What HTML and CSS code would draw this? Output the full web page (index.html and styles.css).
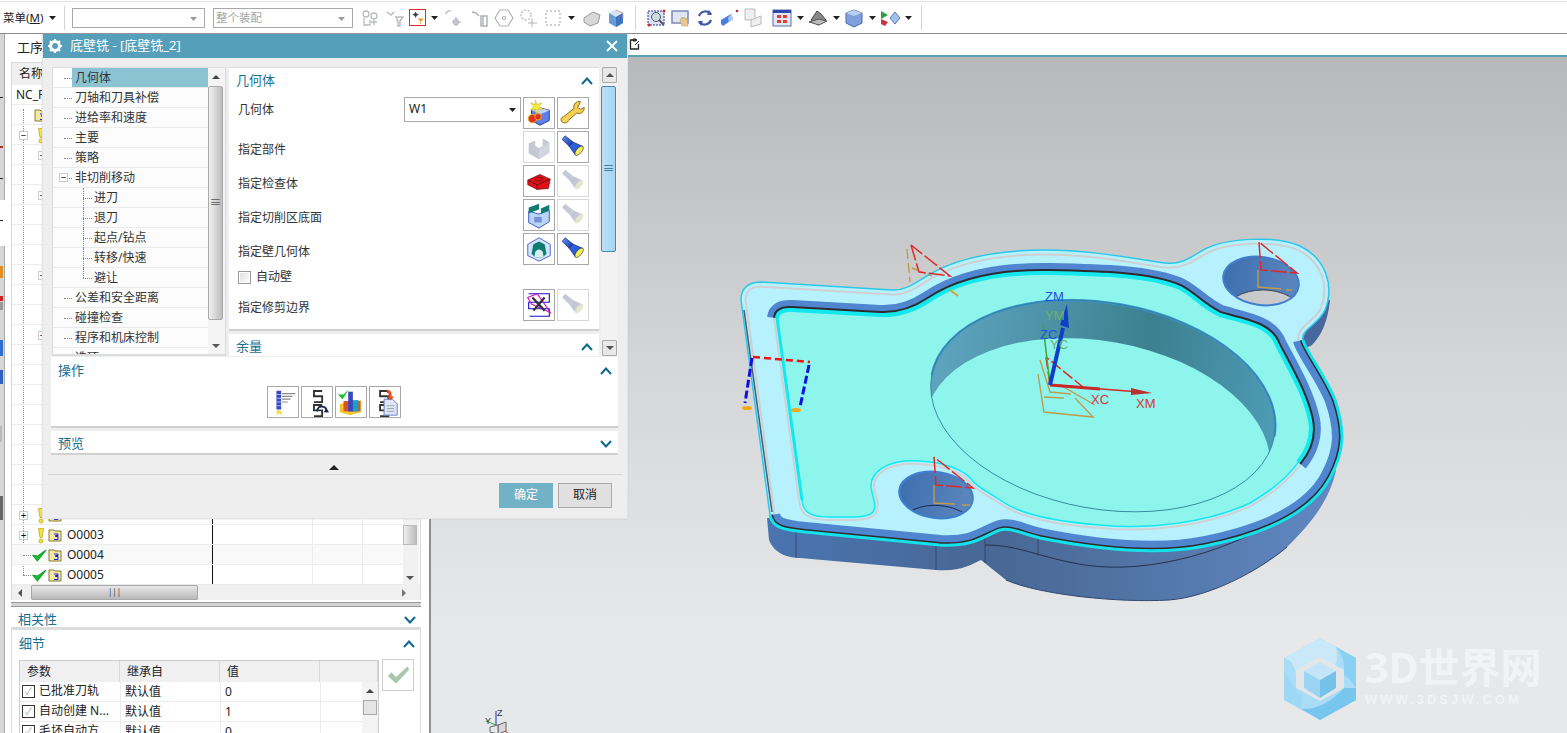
FILE: index.html
```html
<!DOCTYPE html>
<html lang="zh">
<head>
<meta charset="utf-8">
<title>底壁铣</title>
<link rel="stylesheet" href="styles.css">
</head>
<body>
<svg class="defs" width="0" height="0">
  <defs>
    <linearGradient id="gBlue" x1="0" y1="0" x2="1" y2="1"><stop offset="0" stop-color="#6a9cf0"/><stop offset="1" stop-color="#0c2aa8"/></linearGradient>
    <linearGradient id="gWall" x1="0" y1="0" x2="1" y2="0"><stop offset="0" stop-color="#5ea4be"/><stop offset=".6" stop-color="#3c8090"/><stop offset="1" stop-color="#4d9bb5"/></linearGradient>
    <linearGradient id="gSide" x1="0" y1="0" x2="1" y2="0"><stop offset="0" stop-color="#4a74b0"/><stop offset=".4" stop-color="#486793"/><stop offset="1" stop-color="#6088c2"/></linearGradient>
    <linearGradient id="gHole" x1="0" y1="0" x2="1" y2="0"><stop offset="0" stop-color="#3f6fb0"/><stop offset="1" stop-color="#5c86bd"/></linearGradient>
    <symbol id="flash" viewBox="0 0 32 32"><path d="M4.400 7.900L7.600 4.100L16 10.700L12 15.300Z" fill="url(#gBlue)" stroke="#0a1c78" stroke-width=".7"/><path d="M12 15.300L16 10.700L26.400 15.400L18.600 24.600Z" fill="#2f5fd8" stroke="#0a1c78" stroke-width=".7"/><ellipse cx="22.500" cy="20" rx="2.800" ry="6.200" transform="rotate(40 22.500 20)" fill="#f5ee5a" stroke="#123" stroke-width=".6"/></symbol>
    <symbol id="flashoff" viewBox="0 0 32 32"><path d="M4.400 7.900L7.600 4.100L16 10.700L12 15.300Z" fill="#c5c9d6"/><path d="M12 15.300L16 10.700L26.400 15.400L18.600 24.600Z" fill="#c3c7d6"/><ellipse cx="22.500" cy="20" rx="2.800" ry="6.200" transform="rotate(40 22.500 20)" fill="#e6e6cf"/></symbol>
    <symbol id="sfold" viewBox="0 0 14 14"><path d="M1 2h5l1 1h6v10H1Z" fill="#f3e7a4" stroke="#8a7a30"/><path d="M6 6h4v1.500H7.500v1H10v3H6" fill="none" stroke="#1020d8" stroke-width="1"/></symbol>
    <symbol id="warn" viewBox="0 0 10 16"><path d="M2.500 1h5L6 10H4Z" fill="#f5e43a" stroke="#b8a010" stroke-width=".7"/><circle cx="5" cy="13.500" r="2" fill="#f5e43a" stroke="#b8a010" stroke-width=".7"/></symbol>
    <symbol id="okmark" viewBox="0 0 14 14"><path d="M1 7L5 12L13 2L5.500 7.500Z" fill="#18c030" stroke="#10a028"/></symbol>
    <symbol id="caret" viewBox="0 0 7 4"><path d="M0 0H7L3.500 4Z" fill="#222"/></symbol>
    <symbol id="up" viewBox="0 0 12 8"><path d="M1 7L6 1.500L11 7" fill="none" stroke="#0e6a8c" stroke-width="2"/></symbol>
    <symbol id="down" viewBox="0 0 12 8"><path d="M1 1L6 6.500L11 1" fill="none" stroke="#0e6a8c" stroke-width="2"/></symbol>
    <symbol id="sloop" viewBox="0 0 14 24"><path d="M9 1H2v4.500h7v5H2M9 13H2v4.500h7v5H2" fill="none" stroke="#333" stroke-width="1.600"/></symbol>
    <symbol id="gtool" viewBox="0 0 20 20"><g fill="none" stroke="#b9bcc0" stroke-width="1.300"><circle cx="6" cy="6" r="3"/><circle cx="14" cy="8" r="3"/><path d="M4 10v7h6v-5M14 12v5M11 14h6"/></g></symbol>
  </defs>
</svg>

<div class="app">
  <header class="toolbar">
    <span class="menu">菜单(<u>M</u>)</span>
    <svg class="dd"><use href="#caret"/></svg>
    <i class="tsep t0"></i>
    <span class="tcombo first"><svg class="ddg"><use href="#caret"/></svg></span>
    <span class="tcombo second">整个装配<svg class="ddg"><use href="#caret"/></svg></span>
    <span class="ticons">
      <svg class="ti"><use href="#gtool"/></svg>
      <svg class="ti" viewBox="0 0 20 20"><g fill="none" stroke="#b9bcc0" stroke-width="1.500"><path d="M3 4l4 3 3-3M12 9h7l-3 4v5h-2v-5Z"/></g></svg>
      <span class="ti boxed"><svg viewBox="0 0 16 16" width="15" height="15"><path d="M3 5h6M6 2v6" stroke="#333" fill="none"/><circle cx="6" cy="5" r="1.500" fill="none" stroke="#333"/><path d="M8 9h7l-3 3v3h-1v-3Z" fill="#e8a020"/></svg></span>
      <svg class="dd"><use href="#caret"/></svg>
      <svg class="ti ml2" viewBox="0 0 20 20"><g fill="none" stroke="#b0b3b8" stroke-width="1.200"><path d="M2 6q1-4 5-3M12 9v9M8 14h9"/><circle cx="12" cy="14" r="2.500"/></g></svg>
      <svg class="ti ml2" viewBox="0 0 20 20"><g fill="none" stroke="#b0b3b8" stroke-width="1.500"><path d="M2 4l4 1 3 3M11 8h6v10h-6ZM13 8v10"/></g></svg>
      <svg class="ti" viewBox="0 0 20 20"><g fill="none" stroke="#b0b3b8" stroke-width="1.200"><path d="M6 2h8l5 8-5 8H6l-5-8Z"/><circle cx="10" cy="10" r="1.500"/></g></svg>
      <svg class="ti" viewBox="0 0 20 20"><g fill="none" stroke="#b0b3b8" stroke-width="1.200" stroke-dasharray="2 1.500"><circle cx="8" cy="7" r="5"/></g><path d="M14 10v9M10 15h9" stroke="#b0b3b8"/></svg>
      <svg class="ti ml1" viewBox="0 0 20 20"><rect x="3" y="3" width="14" height="14" fill="none" stroke="#9a9da2" stroke-dasharray="2 2"/></svg>
      <svg class="dd"><use href="#caret"/></svg>
      <svg class="ti ml3" viewBox="0 0 20 20"><path d="M2 10l9-6 7 3-2 8-8 3-6-4Z" fill="#d8d8d8" stroke="#999"/></svg>
      <svg class="ti" viewBox="0 0 20 20"><path d="M3 5l7-3 7 3v10l-7 4-7-4Z" fill="#6c9ad8"/><path d="M3 5l7-3 7 3-7 4Z" fill="#d8e6f2"/><path d="M10 9v10l7-4V5Z" fill="#3f74c0"/><path d="M10 2l7 3v5" fill="none" stroke="#e8a0a0"/></svg>
      <i class="tsep"></i>
      <svg class="ti" viewBox="0 0 20 20"><rect x="1" y="3" width="16" height="14" fill="#dbe3f2" stroke="#2030a0" stroke-dasharray="2 1"/><circle cx="9" cy="9" r="4.500" fill="#cdd" stroke="#556"/><path d="M12 12l5 5" stroke="#556" stroke-width="2"/><circle cx="2" cy="17" r="1.500" fill="#d22"/><circle cx="17" cy="3" r="1.500" fill="#d22"/></svg>
      <svg class="ti" viewBox="0 0 20 20"><rect x="1" y="3" width="16" height="12" fill="#dfe5f2" stroke="#7c88b8" stroke-width="1.500"/><path d="M9 12l2-3 1 2 1-2 1 2 2-1 1 8h-6Z" fill="#e8c890" stroke="#b49a60" stroke-width=".5"/></svg>
      <svg class="ti" viewBox="0 0 20 20"><path d="M4 8a7 7 0 0 1 12-2M16 12a7 7 0 0 1-12 2" fill="none" stroke="#4358a8" stroke-width="2.200"/><path d="M14 2l3 5-5 0ZM6 18l-3-5 5 0Z" fill="#4358a8"/></svg>
      <svg class="ti" viewBox="0 0 20 20"><path d="M2 12l10-6 2 5-10 7-2-2Z" fill="#4a7ee0"/><path d="M12 6l2 5-4 3-1-4Z" fill="#a8c8f0"/><circle cx="18" cy="3" r="1.300" fill="#d22"/></svg>
      <svg class="ti" viewBox="0 0 20 20"><g fill="#eee" stroke="#bbb"><path d="M2 1h10v11H2Z"/><path d="M8 12l10-4v8l-10 3Z"/></g></svg>
      <span class="tgap"></span>
      <svg class="ti" viewBox="0 0 20 20"><rect x="1" y="2" width="18" height="16" fill="#e4e8f6" stroke="#5c6cb8"/><rect x="1" y="2" width="18" height="3" fill="#3048a8"/><g fill="#e04030"><rect x="5" y="7" width="4" height="3"/><rect x="11" y="7" width="4" height="3"/><rect x="5" y="12" width="4" height="3"/><rect x="11" y="12" width="4" height="3"/></g></svg>
      <svg class="dd"><use href="#caret"/></svg>
      <svg class="ti" viewBox="0 0 20 20"><path d="M3 12l6-9 4 3 5 6-8 5Z" fill="#888" stroke="#444"/><path d="M1 14l10-3 8 2-8 4Z" fill="#bbb" stroke="#555"/></svg>
      <svg class="dd"><use href="#caret"/></svg>
      <svg class="ti" viewBox="0 0 20 20"><path d="M2 5l8-3 8 3v10l-8 4-8-4Z" fill="#7ea0dc" stroke="#4a68b0"/><path d="M2 5l8 3 8-3-8-3Z" fill="#bcd0ef"/></svg>
      <svg class="dd"><use href="#caret"/></svg>
      <svg class="ti" viewBox="0 0 20 20"><path d="M10 10l5-6 5 6-5 6Z" fill="#a4c0ec" stroke="#5a78b8"/><path d="M1 3l7 4-7 4Z" fill="#28a040"/><path d="M1 11l7 3-3 4-4-2Z" fill="#c83838"/></svg>
      <svg class="dd"><use href="#caret"/></svg>
      <i class="tsep"></i>
    </span>
  </header>

  <div class="main">
    <svg class="strip" viewBox="0 0 5 699" aria-hidden="true">
      <rect width="4" height="166" fill="#d6d6d6"/><rect y="212" width="4" height="487" fill="#d6d6d6"/>
      <rect x="4" width="1" height="166" fill="#aaa"/><rect x="4" y="212" width="1" height="487" fill="#aaa"/>
      <rect y="63" width="3" height="1" fill="#222"/><rect y="112" width="3" height="2" fill="#a03020"/><rect y="144" width="3" height="1" fill="#222"/><rect y="186" width="3" height="1" fill="#222"/>
      <rect y="232" width="3" height="12" fill="#e09020"/><rect y="262" width="3" height="5" fill="#d02020"/><rect y="268" width="3" height="8" fill="#999"/>
      <rect y="306" width="3" height="16" fill="#3070d0"/><rect y="336" width="3" height="14" fill="#3060c0"/><rect y="392" width="2" height="16" fill="#bbb"/><rect y="462" width="3" height="24" fill="#666"/>
    </svg>

    <aside class="left">
      <div class="nav-title">工序导航器</div>
      <section class="nav">
        <div class="nav-head">名称</div>
        <div class="nav-body">
          <div class="nav-rows">
            <div class="nr"><span class="root">NC_PROGRAM</span></div>
            <div class="nr"><svg class="fold f1"><use href="#sfold"/></svg></div>
            <div class="nr"><i class="tg">−</i><svg class="wn w1"><use href="#warn"/></svg></div>
            <div class="nr"><i class="tg sub">−</i></div>
            <div class="nr"></div>
            <div class="nr"><i class="tg sub">−</i></div>
            <div class="nr"></div><div class="nr"></div><div class="nr"></div>
            <div class="nr"><i class="tg sub">−</i></div>
            <div class="nr"></div><div class="nr"></div>
            <div class="nr"><i class="tg sub">−</i></div>
            <div class="nr"></div><div class="nr"></div><div class="nr"></div><div class="nr"></div>
            <div class="nr"></div><div class="nr"></div><div class="nr"></div><div class="nr"></div>
            <div class="nr"><i class="tg">+</i><svg class="wn"><use href="#warn"/></svg><svg class="fold"><use href="#sfold"/></svg><span>O0002</span></div>
            <div class="nr"><i class="tg">+</i><svg class="wn"><use href="#warn"/></svg><svg class="fold"><use href="#sfold"/></svg><span>O0003</span></div>
            <div class="nr alt"><i class="tg none"></i><svg class="ok"><use href="#okmark"/></svg><svg class="fold"><use href="#sfold"/></svg><span>O0004</span></div>
            <div class="nr"><i class="tg none"></i><svg class="ok"><use href="#okmark"/></svg><svg class="fold"><use href="#sfold"/></svg><span>O0005</span></div>
          </div>
          <div class="nav-vs"><i class="nav-vthumb"></i><i class="arrow-d nav-vd"></i></div>
        </div>
        <div class="nav-hs"><i class="arrow-l"></i><i class="nav-hthumb"><b>|||</b></i><i class="arrow-r"></i></div>
      </section>
      <div class="splitter"></div>
      <div class="sect rel"><span>相关性</span><svg class="chev"><use href="#down"/></svg></div>
      <div class="sect det"><span>细节</span><svg class="chev"><use href="#up"/></svg></div>
      <div class="details">
        <div class="grid">
          <div class="grid-head"><span>参数</span><span>继承自</span><span>值</span><span></span></div>
          <div class="grid-wrap">
            <div class="grid-rows">
              <div class="gr"><span class="g1"><i class="cb">✓</i>已批准刀轨</span><span>默认值</span><span>0</span><span></span></div>
              <div class="gr"><span class="g1"><i class="cb">✓</i>自动创建 N...</span><span>默认值</span><span>1</span><span></span></div>
              <div class="gr"><span class="g1"><i class="cb">✓</i>毛坯自动方...</span><span>默认值</span><span>0</span><span></span></div>
            </div>
            <div class="grid-vs"><i class="arrow-u"></i><i class="grid-thumb"></i></div>
          </div>
        </div>
        <button class="okbtn" type="button"><svg viewBox="0 0 32 32" width="30" height="30"><path d="M5 17L9 13L14 18L26 7L28 10L14 25Z" fill="#a9c7ad"/></svg></button>
      </div>
    </aside>

    <main class="view">
      <div class="view-tab"><span class="tab-ic"><svg viewBox="0 0 12 12" width="12" height="12"><path d="M8 2H1.500V11H9.500V6" fill="none" stroke="#222" stroke-width="1.300"/><path d="M4 1h3v2H4ZM6 7l4-4" fill="none" stroke="#222"/></svg></span></div>
      <div class="canvas">
        <svg class="model" viewBox="431 57 1136 676" aria-label="零件">
          <defs>
            <path id="outer" d="M741 300Q741 283 760 282L892 290C905 291 915 283 930 274C960 257 1000 250 1045 250C1090 250 1130 258 1165 263C1180 265 1190 258 1203 250C1225 238 1275 235 1300 246C1325 258 1335 285 1325 310C1318 325 1300 330 1303 340C1305 350 1325 375 1335 400C1345 430 1345 450 1330 478C1310 515 1260 535 1205 546C1160 555 1100 550 1040 538C1020 533 1010 527 1000 530C985 535 975 547 940 545L805 532C785 530 772 528 770 515Z"/>
            <path id="floor" d="M777 318Q778 309 792 310L880 315C900 316 915 310 930 300C960 280 1000 272 1050 273C1100 274 1150 275 1180 288C1195 296 1200 305 1220 315C1245 322 1270 325 1277 345C1290 370 1305 395 1310 420C1315 450 1290 480 1250 503C1210 522 1150 530 1100 525C1060 522 1020 515 1000 500C985 490 978 488 972 480C960 465 930 460 905 461C885 463 872 472 871 485C871 495 878 505 873 512C868 518 855 517 830 517C815 517 803 515 802 500Z"/>
            <path id="topband" d="M777 318Q778 309 792 310L880 315C900 316 915 310 930 300C960 280 1000 272 1050 273C1100 274 1150 275 1180 288C1195 296 1200 305 1220 315C1245 322 1270 325 1277 345C1290 370 1305 395 1310 420C1313 435 1308 450 1298 462"/>
            <path id="botedge" d="M770 515C772 528 785 530 805 532L940 545C975 547 985 535 1000 530C1010 527 1020 533 1040 538C1100 550 1160 555 1205 546C1260 535 1310 515 1330 478C1345 450 1345 430 1335 400C1325 375 1305 350 1303 340"/>
            <clipPath id="clipOuter"><use href="#outer"/></clipPath>
            <clipPath id="clipEll"><ellipse cx="1103" cy="406" rx="174" ry="103" transform="rotate(10 1103 406)"/></clipPath>
            <clipPath id="clipH1"><ellipse cx="1261" cy="281" rx="38" ry="24" transform="rotate(8 1261 281)"/></clipPath>
            <clipPath id="clipH2"><ellipse cx="936" cy="495" rx="37" ry="23" transform="rotate(8 936 495)"/></clipPath>
          </defs>
          <path d="M767 518L769 540C775 555 790 558 800 558L936 570C960 572 970 565 981 560L1006 580C1040 595 1120 603 1169 600C1210 597 1260 570 1287 547C1310 525 1330 500 1336 470L1300 470L1000 525Z" fill="url(#gSide)"/>
          <path d="M985 545C1020 545 1040 558 1085 565C1150 575 1235 550 1290 512" fill="none" stroke="#26314d" stroke-width="1"/>
          <path d="M1006 580C1040 595 1120 603 1169 600C1210 597 1260 570 1287 547" fill="none" stroke="#33476e" stroke-width="1"/>
          <path d="M796 530V558M936 545V570M985 538V563M1038 538V556" stroke="#2c3a5c" stroke-width=".7"/>
          <path d="M1303 338C1300 345 1305 350 1312 345C1322 335 1328 320 1330 300L1320 300Z" fill="#46689c"/>
          <use href="#outer" fill="#b7f1fe"/>
          <g clip-path="url(#clipOuter)"><use href="#outer" fill="none" stroke="#cfcfd0" stroke-width="11"/><use href="#outer" fill="none" stroke="#b7f1fe" stroke-width="7"/></g>
          <g clip-path="url(#clipOuter)"><use href="#botedge" fill="none" stroke="#4f86cf" stroke-width="20"/><use href="#botedge" fill="none" stroke="#2c2c30" stroke-width="6"/></g>
          <use href="#outer" fill="none" stroke="#2cc7e8" stroke-width="1.500"/>
          <use href="#botedge" fill="none" stroke="#14e2ea" stroke-width="3"/>
          <path d="M744 310L772 512" stroke="#4a5a70" stroke-width="1.500" fill="none"/>
          <use href="#floor" fill="none" stroke="#cfd2d4" stroke-width="8"/>
          <use href="#floor" fill="none" stroke="#b7f1fe" stroke-width="4"/>
          <use href="#topband" fill="none" stroke="#4f86cf" stroke-width="20"/>
          <use href="#topband" fill="none" stroke="#2c2c30" stroke-width="8"/>
          <use href="#floor" fill="#8ef5ec"/>
          <use href="#floor" fill="none" stroke="#12e8ee" stroke-width="1.500"/>
          <use href="#topband" fill="none" stroke="#12e8ee" stroke-width="4"/>
          <path d="M777 318L802 500" fill="none" stroke="#12e8ee" stroke-width="3"/>
          <ellipse cx="1103" cy="406" rx="174" ry="103" transform="rotate(10 1103 406)" fill="url(#gWall)"/>
          <g clip-path="url(#clipEll)"><ellipse cx="1098" cy="444" rx="174" ry="103" transform="rotate(10 1098 444)" fill="#8ef5ec"/></g>
          <ellipse cx="1103" cy="406" rx="174" ry="103" transform="rotate(10 1103 406)" fill="none" stroke="#3d93cc" stroke-width="2.500" pathLength="100" stroke-dasharray="0 50 50 0"/>
          <ellipse cx="1103" cy="406" rx="174" ry="103" transform="rotate(10 1103 406)" fill="none" stroke="#2f7f98" stroke-width=".8"/>
          <ellipse cx="1261" cy="281" rx="38" ry="24" transform="rotate(8 1261 281)" fill="url(#gHole)"/>
          <g clip-path="url(#clipH1)"><ellipse cx="1263" cy="313" rx="38" ry="23" fill="#c8cacc" stroke="#223" stroke-width=".7"/></g>
          <ellipse cx="1261" cy="281" rx="38" ry="24" transform="rotate(8 1261 281)" fill="none" stroke="#3f7fce" stroke-width="2"/>
          <ellipse cx="936" cy="495" rx="37" ry="23" transform="rotate(8 936 495)" fill="url(#gHole)"/>
          <g clip-path="url(#clipH2)"><path d="M905 515C920 502 950 502 968 516" fill="none" stroke="#1d2a48"/></g>
          <ellipse cx="936" cy="495" rx="37" ry="23" transform="rotate(8 936 495)" fill="none" stroke="#3f7fce" stroke-width="2"/>
          <g fill="none" stroke="#c09a50" stroke-width="1.400">
            <path d="M907 249L910 282" stroke-dasharray="10 4"/><path d="M912 268L932 276" stroke-dasharray="6 3"/>
            <path d="M1258 270V287L1281 289M1286 290H1292"/>
            <path d="M934 485V503L955 504M962 505H970"/>
            <path d="M1040 360L1050 392L1071 394M1038 374L1044 412L1093 417L1075 398M1044 397L1064 398M1060 385L1095 405"/>
            <path d="M950 290L958 296" stroke="#d8a030" stroke-width="2"/>
          </g>
          <g fill="none" stroke="#e02828" stroke-width="1.500">
            <path d="M911 245L919 272L950 276L911 245" stroke-dasharray="16 3"/>
            <path d="M1259 242L1261 270L1297 273L1259 242" stroke-dasharray="16 3"/>
            <path d="M934 457L936 485L973 488L934 457" stroke-dasharray="16 3"/>
            <path d="M1046 357L1050 385L1083 387L1046 357" stroke-dasharray="12 3"/>
          </g>
          <path d="M753 357L810 362" stroke="#f01010" stroke-width="2.500" stroke-dasharray="7 4" fill="none"/>
          <path d="M752 358L745 403M809 365L800 407" stroke="#0c10e8" stroke-width="3" stroke-dasharray="8 3" fill="none"/>
          <ellipse cx="747" cy="408" rx="5" ry="2" fill="#f4a818"/><ellipse cx="796" cy="410" rx="5" ry="2" fill="#f4a818"/>
          <path d="M1050 385L1043 325" stroke="#39a839" stroke-width="1.500" fill="none"/>
          <path d="M1050 385L1140 392" stroke="#d82828" stroke-width="1.500" fill="none"/>
          <path d="M1050 385L1100 389" stroke="#c82828" stroke-width="3" fill="none"/>
          <path d="M1131 388L1152 393L1131 395Z" fill="#b83030"/>
          <path d="M1050 385L1063 328" stroke="#0d3fc8" stroke-width="4" fill="none"/>
          <path d="M1060 325L1067 304L1069 328Z" fill="#0d3fc8"/>
          <g class="axlabel">
            <text x="1045" y="301" fill="#1f50e0">ZM</text>
            <text x="1045" y="320" fill="#6cb06c">YM</text>
            <text x="1040" y="339" fill="#1f50e0">ZC</text>
            <text x="1050" y="349" fill="#6cb06c">YC</text>
            <text x="1091" y="404" fill="#d83838">XC</text>
            <text x="1136" y="408" fill="#d83838">XM</text>
          </g>
          <g transform="translate(484 709)" fill="none">
            <path d="M12 2V16" stroke="#2030d0"/><path d="M12 16L2 12" stroke="#28a040"/><path d="M12 16L24 24" stroke="#d02020"/>
            <path d="M14 16l8-3 0 9-8 3Z" fill="#d8d8d8" stroke="#666"/><path d="M6 18l8-2 0 9-8-2Z" fill="#e8e8e8" stroke="#666"/>
          </g>
          <g class="axlabel small"><text x="497" y="716" fill="#333">Z</text><text x="485" y="724" fill="#333">Y</text></g>
        </svg>
        <div class="wm">
          <svg class="wm-logo" viewBox="0 0 72 82" width="72" height="82">
            <path d="M36 0L72 20V62L36 82L0 62V20Z" fill="#a9dcf6"/>
            <path d="M36 0L52 9Q56 25 48 30L36 23L12 37Q10 22 0 20Z" fill="#c9e8f8"/>
            <path d="M52 9L72 20V50Q66 40 60 37V28Q60 18 52 9Z" fill="#89d0f3"/>
            <path d="M72 50V62L36 82L17 71Q40 72 60 50Z" fill="#76c6ee"/>
            <path d="M17 71L0 62V32Q8 50 18 58Z" fill="#9fd8f5"/>
            <path d="M36 19L60 32V50L36 63L12 50V32Z" fill="#e3e6e9"/>
            <path d="M36 24L52 33L36 42L20 33Z" fill="#c4e5f7"/>
            <path d="M20 33L36 42V60L20 50Z" fill="#9bd3f3"/>
            <path d="M52 33L36 42V60L52 50Z" fill="#74c2ea"/>
          </svg>
          <div class="wm-text"><div class="wm-big">3D世界网</div><div class="wm-url">WWW.3DSJW.COM</div></div>
        </div>
      </div>
    </main>
  </div>

  <section class="dialog">
    <div class="dlg-title">
      <svg class="gear" viewBox="0 0 16 16" width="16" height="16"><circle cx="8" cy="8" r="4.500" fill="none" stroke="#fff" stroke-width="3"/><path d="M8 1v3M8 12v3M1 8h3M12 8h3M3 3l2 2M11 11l2 2M13 3l-2 2M5 11l-2 2" stroke="#fff" stroke-width="2"/></svg>
      <span class="dlg-name">底壁铣 - [底壁铣_2]</span>
      <svg class="dlg-x" viewBox="0 0 12 12" width="12" height="12"><path d="M1 1L11 11M11 1L1 11" stroke="#fff" stroke-width="1.800"/></svg>
    </div>
    <div class="dlg-split">
      <div class="dtree">
        <ul class="dtree-list">
          <li class="sel"><span>几何体</span></li>
          <li><span>刀轴和刀具补偿</span></li>
          <li><span>进给率和速度</span></li>
          <li><span>主要</span></li>
          <li><span>策略</span></li>
          <li class="parent"><i class="tg2">−</i><span>非切削移动</span></li>
          <li class="ch"><span>进刀</span></li>
          <li class="ch"><span>退刀</span></li>
          <li class="ch"><span>起点/钻点</span></li>
          <li class="ch"><span>转移/快速</span></li>
          <li class="ch last"><span>避让</span></li>
          <li><span>公差和安全距离</span></li>
          <li><span>碰撞检查</span></li>
          <li><span>程序和机床控制</span></li>
          <li><span>选项</span></li>
        </ul>
        <div class="dtree-vs"><i class="arrow-u au"></i><i class="dtree-thumb"><b>≡</b></i><i class="arrow-d ad"></i></div>
      </div>
      <div class="dform">
        <div class="panels">
          <div class="panel geom">
            <div class="phead"><span>几何体</span><svg class="chev"><use href="#up"/></svg></div>
            <div class="frow top">
              <span class="flabel">几何体</span>
              <span class="fcombo">W1<svg class="dd"><use href="#caret"/></svg></span>
              <button class="ib" type="button"><svg viewBox="0 0 32 32"><path d="M8 13l7-3 12 3v11l-10 5-9-5Z" fill="#5f80e8" stroke="#2238a0"/><path d="M8 13l10 4 9-4-12-3Z" fill="#c6d4f4"/><path d="M12 2l2 5 5-2-3 4 4 3-5 0-2 5-1-5-5 1 3-4-3-4 5 2Z" fill="#f5ee3a" stroke="#c0a020" stroke-width=".5"/><circle cx="9" cy="22" r="4.500" fill="#e03020" stroke="#f0b020"/><circle cx="15" cy="20" r="3.500" fill="#e03020" stroke="#f0b020"/></svg></button>
              <button class="ib" type="button"><svg viewBox="0 0 32 32"><path d="M24 4c-4-1-8 2-7 7L6 20c-3 0-4 5-1 6s5 1 6-2l9-8c4 2 8-1 8-6l-4 2-3-2Z" fill="#f2cf50" stroke="#8a6a10"/><path d="M6 25l4-4" stroke="#fff3b0"/></svg></button>
            </div>
            <div class="frow">
              <span class="flabel">指定部件</span>
              <button class="ib off" type="button"><svg viewBox="0 0 32 32"><path d="M5 12l7-3v6l4 2 4-2V7l7 4v11l-11 7-11-6Z" fill="#c4c8d2"/><path d="M16 17v12l11-7V11l-7 4Z" fill="#d2d5dd"/></svg></button>
              <button class="ib" type="button"><svg viewBox="0 0 32 32"><use href="#flash"/></svg></button>
            </div>
            <div class="frow">
              <span class="flabel">指定检查体</span>
              <button class="ib" type="button"><svg viewBox="0 0 32 32"><path d="M4 15L17 9L28 14L26 24L14 25L4 20Z" fill="#e00f18" stroke="#601010" stroke-width=".7"/><path d="M4 15L14 20V25M14 20L28 14" fill="none" stroke="#601010"/><ellipse cx="16" cy="14" rx="4" ry="2" fill="none" stroke="#801010"/></svg></button>
              <button class="ib off" type="button"><svg viewBox="0 0 32 32"><use href="#flashoff"/></svg></button>
            </div>
            <div class="frow">
              <span class="flabel">指定切削区底面</span>
              <button class="ib" type="button"><svg viewBox="0 0 32 32"><path d="M5 12V24L16 30L27 23V11L16 15Z" fill="#b8d6f6" stroke="#3a50c8"/><path d="M5 8L16 4V10L5 14ZM18 9L27 5V11L18 15Z" fill="#0f7c70"/><path d="M11 18h8v6h-8Z" fill="#7a90d8"/></svg></button>
              <button class="ib off" type="button"><svg viewBox="0 0 32 32"><use href="#flashoff"/></svg></button>
            </div>
            <div class="frow">
              <span class="flabel">指定壁几何体</span>
              <button class="ib" type="button"><svg viewBox="0 0 32 32"><path d="M16 4L28 11V23L16 29L4 23V11Z" fill="#d4e4fa" stroke="#4a60d8"/><path d="M10 11l6-3 6 3 2 10-4 4H12l-4-4Z" fill="#0f7c70"/><path d="M12 19q4-5 8 0l1 6H11Z" fill="#d8f0f0"/></svg></button>
              <button class="ib" type="button"><svg viewBox="0 0 32 32"><use href="#flash"/></svg></button>
            </div>
            <label class="fcheck"><i class="chk"></i>自动壁</label>
            <div class="frow">
              <span class="flabel">指定修剪边界</span>
              <button class="ib" type="button"><svg viewBox="0 0 32 32"><path d="M5 4H27V13H5V20H27V28H6" fill="none" stroke="#1010d0" stroke-width="1.200"/><path d="M4 8L14 4L24 18L28 24L8 15Z" fill="none" stroke="#d010d0" stroke-width="1.200"/><path d="M9 8L22 22M22 8L10 22" stroke="#333" stroke-width="2.400"/></svg></button>
              <button class="ib off" type="button"><svg viewBox="0 0 32 32"><use href="#flashoff"/></svg></button>
            </div>
          </div>
          <div class="panel rest"><div class="phead"><span>余量</span><svg class="chev"><use href="#up"/></svg></div></div>
        </div>
        <div class="dform-vs"><i class="arrow-u btn"></i><i class="dform-thumb"><b>≡</b></i><i class="arrow-d btn"></i></div>
      </div>
    </div>
    <div class="panel wide ops">
      <div class="phead"><span>操作</span><svg class="chev"><use href="#up"/></svg></div>
      <div class="ops-row">
        <button class="ib" type="button"><svg viewBox="0 0 32 32"><path d="M9 4h5v20H9Z" fill="#3848c0"/><path d="M9 8h5M9 12h5M9 16h5M9 20h5" stroke="#b0c0f0"/><path d="M15 7H29M15 10H26M15 13H24M15 16H21" stroke="#888" stroke-width="1.300"/><path d="M11 24l2 2 3-1-2 2 1 3-3-2-3 2 1-3-2-1 3-1Z" fill="#f0d830"/></svg></button>
        <button class="ib" type="button"><svg viewBox="0 0 32 32"><svg x="4" y="3" width="14" height="24"><use href="#sloop"/></svg><path d="M16 26q1-6 6-5t4 6" fill="none" stroke="#16264e" stroke-width="2"/><path d="M23 27h6l-3-4Z" fill="#16264e"/></svg></button>
        <button class="ib" type="button"><svg viewBox="0 0 32 32"><path d="M4 18L27 14V27L15 30L4 27Z" fill="#f2c830"/><path d="M8 15h18v11H8Z" fill="#e05020"/><path d="M16 14h8v12h-8Z" fill="#20a0c0"/><path d="M13 5h5v21h-5Z" fill="#3848c0"/><path d="M2 8L7 13L14 2L8 8Z" fill="#18c030"/></svg></button>
        <button class="ib" type="button"><svg viewBox="0 0 32 32"><svg x="2" y="3" width="13" height="24"><use href="#sloop"/></svg><path d="M15 13H24L29 18V30H15Z" fill="#dfe6f6" stroke="#6078c0"/><path d="M18 20h8M18 23h8M18 26h8" stroke="#9aa"/><path d="M18 3q5 0 5 5v2h3l-4 4-4-4h2V8q0-2-2-2Z" fill="#e05020"/></svg></button>
      </div>
    </div>
    <div class="panel wide prev"><div class="phead"><span>预览</span><svg class="chev"><use href="#down"/></svg></div></div>
    <div class="collapse"><i class="tri"></i></div>
    <footer class="dlg-foot">
      <button class="b-ok" type="button">确定</button>
      <button class="b-cancel" type="button">取消</button>
    </footer>
  </section>
</div>
</body>
</html>
```
FILE: styles.css
```css
* { box-sizing: border-box; }
html, body { margin: 0; height: 100%; overflow: hidden; }
body { font: 12px/1.2 "Noto Sans", "Noto Sans CJK SC", sans-serif; color: #333; background: #fff; }
.defs { position: absolute; }
i { font-style: normal; }
button { padding: 0; margin: 0; font: inherit; }

.app { position: relative; width: 1567px; height: 733px; display: flex; flex-direction: column; }

/* toolbar */
.toolbar { flex: none; display: flex; align-items: center; background: #fff; border-top: 1px solid #e2e2e2; border-bottom: 1px solid #8c8c8c; padding: 0 0 0 3px; margin-top: 1px; height: 33px; }
.menu { font-size: 11.500px; width: 45px; color: #222; white-space: nowrap; }
.dd { width: 7px; height: 4px; flex: none; margin: 0 0 0 1px; }
.tsep { width: 1px; height: 24px; background: #d4d4d4; margin: 0 11px 0 8px; flex: none; }
.tsep.t0 { margin-right: 7px; }
.tcombo { height: 20px; border: 1px solid #a8a8a8; position: relative; display: flex; align-items: center; padding-left: 2px; color: #a4a4a4; font-size: 11.500px; flex: none; }
.tcombo.first { width: 133px; margin-right: 8px; }
.tcombo.second { width: 140px; }
.ddg { position: absolute; right: 7px; top: 8px; width: 7px; height: 4px; opacity: .45; }
.ticons { display: flex; align-items: center; margin-left: 7px; gap: 4px; }
.ti { width: 20px; height: 20px; flex: none; }
.ti.boxed { width: 17px; height: 17px; border: 1px solid #d83030; display: block; line-height: 0; margin-left: 1px; }
.ml1 { margin-left: 1px; }
.ml2 { margin-left: 2px; }
.ml3 { margin-left: 3px; }
.tgap { width: 1px; }
.ticons .tsep { margin: 0 7px 0 5px; }

/* body */
.main { flex: 1; min-height: 0; display: flex; }
.strip { width: 5px; height: 699px; flex: none; }

/* left panel */
.left { width: 426px; flex: none; padding-left: 6px; border-right: 2px solid #8f8f8f; background: #fff; overflow: hidden; }
.nav-title { height: 28px; font-size: 13px; padding: 6px 0 0 6px; color: #222; white-space: nowrap; }
.nav { width: 410px; border: 1px solid #d8d8d8; border-bottom: 0; }
.nav-head { height: 22px; background: #f0f0f0; font-size: 12px; padding: 4px 0 0 7px; color: #222; }
.nav-body { display: flex; height: 500px; }
.nav-rows { position: relative; width: 391px; }
.nav-rows::before { content: ""; position: absolute; left: 11px; top: 24px; bottom: 10px; border-left: 1px dotted #888; }
.nr { position: relative; height: 20px; display: flex; align-items: center; border-bottom: 1px solid #ececec; padding: 1px 0 0 7px; font-size: 12px; color: #222; background: linear-gradient(#111, #111) 200px 0 / 1px 100% no-repeat, linear-gradient(#ececec, #ececec) 300px 0 / 1px 100% no-repeat, linear-gradient(#ececec, #ececec) 350px 0 / 1px 100% no-repeat; }
.nr.alt { background-color: #f9f9f9; }
.root { margin-left: -3px; color: #222; }
.tg { position: relative; width: 9px; height: 9px; flex: none; border: 1px solid #ccc; background: #fff; color: #111; font-size: 10px; line-height: 7px; text-align: center; margin-right: 8px; }
.tg.sub { margin-left: 19px; }
.tg.none { border: 0; background: none; border-top: 1px dotted #888; height: 1px; margin-left: 4px; margin-right: 0; width: 8px; }
.wn { width: 10px; height: 17px; flex: none; margin-right: 2px; }
.ok { width: 15px; height: 15px; flex: none; margin-right: 1px; margin-left: 1px; }
.fold { width: 14px; height: 14px; flex: none; margin-right: 5px; }
.fold.f1 { margin-left: 15px; }
.nav-vs { position: relative; width: 16px; flex: none; background: #f1f1f1; }
.nav-vthumb { position: absolute; left: 0; right: 2px; top: 440px; height: 20px; background: linear-gradient(90deg, #eee, #bcbcbc); border: 1px solid #bbb; }
.nav-vd { position: absolute; left: 3px; bottom: 5px; }
.nav-hs { height: 15px; position: relative; background: #f0f0f0; }
.nav-hthumb { position: absolute; left: 19px; top: 0; width: 167px; height: 15px; background: linear-gradient(#e8e8e8, #b8b8b8); border: 1px solid #a8a8a8; border-radius: 1px; text-align: center; font-size: 8px; line-height: 12px; color: #444; }
.nav-hthumb b { font-weight: normal; }
.nav-hs .arrow-l { position: absolute; left: 6px; top: 4px; }
.nav-hs .arrow-r { position: absolute; left: 390px; top: 4px; }
.arrow-l { display: block; width: 0; height: 0; border: 4px solid transparent; border-left-width: 0; border-right: 4px solid #555; }
.arrow-r { display: block; width: 0; height: 0; border: 4px solid transparent; border-right-width: 0; border-left: 4px solid #777; }
.arrow-u { display: block; width: 0; height: 0; border: 4px solid transparent; border-top-width: 0; border-bottom: 4px solid #444; }
.arrow-d { display: block; width: 0; height: 0; border: 4px solid transparent; border-bottom-width: 0; border-top: 4px solid #555; }
.splitter { width: 410px; height: 5px; margin-top: 2px; background: #d4d4d4; border: 1px solid #999; border-width: 1px 0; }
.sect { width: 410px; display: flex; align-items: center; justify-content: space-between; padding: 0 5px 0 7px; color: #16708f; font-size: 13px; }
.rel { height: 23px; border-bottom: 3px solid #dcdcdc; padding-top: 5px; }
.det { height: 26px; padding-top: 1px; border-left: 1px solid #dcdcdc; border-right: 1px solid #dcdcdc; }
.chev { width: 12px; height: 8px; flex: none; }
.details { width: 410px; display: flex; gap: 3px; padding: 4px 6px 0 7px; align-items: flex-start; border-left: 1px solid #dcdcdc; border-right: 1px solid #dcdcdc; height: 80px; }
.grid { width: 360px; border: 1px solid #ccc; border-bottom: 0; flex: none; }
.grid-head { display: grid; grid-template-columns: 100px 100px 100px 58px; height: 21px; background: #f0f0f0; align-items: center; font-size: 12px; color: #222; }
.grid-head span { height: 100%; padding: 4px 0 0 7px; border-right: 1px solid #d8d8d8; }
.grid-wrap { display: flex; }
.grid-rows { width: 342px; }
.gr { display: grid; grid-template-columns: 100px 100px 100px 42px; height: 20px; border-bottom: 1px solid #ececec; align-items: center; font-size: 12px; color: #222; }
.gr span { padding-left: 4px; white-space: nowrap; }
.gr span + span { border-left: 1px solid #ececec; height: 100%; padding-top: 3px; }
.gr .g1 { padding-left: 2px; display: flex; align-items: center; }
.cb { width: 13px; height: 13px; border: 1px solid #333; font-size: 10px; line-height: 11px; text-align: center; color: #aaa; margin-right: 4px; flex: none; }
.grid-vs { position: relative; width: 16px; flex: none; background: #f3f3f3; }
.grid-vs .arrow-u { position: absolute; left: 4px; top: 7px; }
.grid-thumb { position: absolute; left: 1px; top: 18px; width: 14px; height: 15px; background: #e4e4e4; border: 1px solid #aaa; }
.okbtn { width: 32px; height: 32px; background: #fff; border: 1px solid #cfcfcf; display: flex; align-items: center; justify-content: center; margin-top: -1px; }

/* graphics view */
.view { flex: 1; min-width: 0; display: flex; flex-direction: column; }
.view-tab { flex: none; background: #fff; border-bottom: 2px solid #5aa0b6; padding: 4px 0 0 198px; line-height: 0; height: 23px; }
.canvas { position: relative; flex: 1; min-height: 0; background: linear-gradient(#b7b8ba, #d4d5d7 45%, #e7e8ea 85%); overflow: hidden; }
.model { position: absolute; left: 0; top: 0; width: 1136px; height: 676px; }
.axlabel text { font: 13px "Liberation Sans", sans-serif; }
.axlabel.small text { font-size: 9px; }
.wm { position: absolute; left: 853px; top: 581px; display: flex; gap: 9px; }
.wm-logo { flex: none; }
.wm-text { padding-top: 8px; }
.wm-big { font: bold 41px/42px "Noto Sans", "Noto Sans CJK SC", sans-serif; color: #f2f3f5; white-space: nowrap; }
.wm-url { font: bold 13px/14px "Liberation Sans", sans-serif; color: #f2f3f5; letter-spacing: 3px; white-space: nowrap; margin-top: 5px; }

/* dialog */
.dialog { position: absolute; left: 42px; top: 34px; width: 586px; height: 485px; background: #eeeeee; border: 1px solid #e4e4e4; border-top: 0; box-shadow: 0 0 1px #bbb; display: flex; flex-direction: column; align-items: flex-start; }
.dlg-title { width: 100%; height: 24px; flex: none; background: #559fba; color: #fff; display: flex; align-items: center; padding: 0 9px 0 4px; font-size: 13px; }
.dlg-name { margin-left: 7px; flex: 1; }
.dlg-split { display: flex; gap: 3px; margin: 9px 0 0 9px; height: 289px; flex: none; }
.dtree { width: 174px; height: 289px; display: flex; border: 1px solid #dcdcdc; border-bottom-width: 2px; background: #fff; overflow: hidden; }
.dtree-list { position: relative; list-style: none; margin: 0; padding: 0; width: 155px; }
.dtree-list::before { content: ""; position: absolute; left: 10px; top: 8px; bottom: 0; border-left: 1px dotted #888; }
.dtree-list li { position: relative; height: 20px; border-bottom: 1px solid #eaeaea; padding-left: 22px; font-size: 12px; line-height: 19px; color: #333; white-space: nowrap; background: #fcfcfc; }
.dtree-list li::before { content: ""; position: absolute; left: 11px; top: 10px; width: 8px; border-top: 1px dotted #888; }
.dtree-list li.ch { padding-left: 41px; }
.dtree-list li.ch::before { left: 30px; width: 9px; }
.dtree-list li.ch::after { content: ""; position: absolute; left: 30px; top: 0; height: 20px; border-left: 1px dotted #888; }
.dtree-list li.ch.last::after { height: 10px; }
.dtree-list li.sel { background: #fff; }
.dtree-list li.sel span { position: absolute; left: 19px; right: 0; top: 0; height: 19px; background: #8bc3d3; padding-left: 3px; }
.tg2 { position: absolute; left: 6px; top: 5px; width: 9px; height: 9px; border: 1px solid #ccc; background: #fff; font-size: 10px; line-height: 7px; text-align: center; color: #111; z-index: 1; }
.dtree-vs { position: relative; width: 17px; flex: none; background: #f4f4f4; }
.au { position: absolute; left: 4px; top: 7px; }
.ad { position: absolute; left: 4px; bottom: 6px; }
.dtree-thumb { position: absolute; left: 0; top: 18px; width: 15px; height: 234px; background: linear-gradient(90deg, #f0f0f0, #bdbdbd); border: 1px solid #aaa; border-radius: 2px; display: flex; align-items: center; justify-content: center; color: #555; }
.dtree-thumb b, .dform-thumb b { font-weight: normal; font-size: 12px; }
.dform { display: flex; gap: 2px; }
.panels { width: 370px; display: flex; flex-direction: column; gap: 3px; height: 289px; overflow: hidden; }
.panel { background: #fff; border-bottom: 2px solid #d0d0d0; flex: none; }
.phead { height: 26px; display: flex; align-items: center; justify-content: space-between; padding: 0 6px 0 7px; color: #16708f; font-size: 13px; }
.geom { height: 264px; border-top: 1px solid #dcdcdc; }
.rest { height: 30px; }
.frow { display: flex; align-items: center; justify-content: flex-end; gap: 2px; height: 32px; margin: 0 10px 2px 9px; }
.frow.top { align-items: flex-start; margin-top: 3px; }
.flabel { flex: 1; font-size: 12px; color: #333; padding-top: 6px; white-space: nowrap; }
.frow.top .flabel { padding-top: 0; line-height: 25px; }
.fcombo { width: 117px; height: 25px; border: 1px solid #a8a8a8; display: flex; align-items: center; justify-content: space-between; padding: 0 4px; font-size: 12px; color: #222; }
.ib { width: 32px; height: 32px; flex: none; background: #fff; border: 1px solid #a8a8a8; display: block; line-height: 0; }
.ib svg { width: 30px; height: 30px; }
.ib.off { border-color: #d8d8d8; }
.fcheck { height: 21px; display: flex; align-items: center; gap: 5px; margin: 1px 0 1px 9px; font-size: 12px; color: #333; }
.chk { width: 13px; height: 13px; border: 1px solid #999; background: linear-gradient(135deg, #ddd, #fff); box-shadow: inset 0 0 0 1px #fff; }
.dform-vs { width: 17px; height: 289px; background: #f2f2f2; display: flex; flex-direction: column; align-items: center; justify-content: space-between; position: relative; }
.arrow-u.btn, .arrow-d.btn { position: relative; width: 15px; height: 16px; border: 1px solid #aaa; background: #e8e8e8; border-radius: 1px; }
.arrow-u.btn::after, .arrow-d.btn::after { content: ""; position: absolute; left: 3px; top: 5px; border: 4px solid transparent; }
.arrow-u.btn::after { border-top-width: 0; border-bottom: 4px solid #555; }
.arrow-d.btn::after { border-bottom-width: 0; border-top: 4px solid #555; }
.dform-thumb { position: absolute; left: 0; top: 19px; width: 15px; height: 166px; background: linear-gradient(90deg, #bcdff5, #a5d5f3); border: 1px solid #4a88b8; border-radius: 2px; display: flex; align-items: center; justify-content: center; color: #2a6a90; }
.wide { width: 567px; margin-left: 8px; }
.ops { height: 71px; margin-top: 1px; }
.ops .phead { padding-top: 1px; }
.ops-row { display: flex; justify-content: center; gap: 2px; margin-top: 3px; padding-right: 2px; }
.prev { height: 24px; margin-top: 3px; }
.prev .phead { height: 22px; padding-top: 3px; }
.collapse { width: 100%; height: 19px; flex: none; display: flex; justify-content: center; align-items: center; padding-top: 5px; padding-right: 2px; }
.tri { width: 0; height: 0; border: 5px solid transparent; border-top-width: 0; border-bottom: 5px solid #222; }
.dlg-foot { align-self: stretch; margin: 0 5px; height: 44px; border-top: 1px solid #d4d4d4; display: flex; justify-content: flex-end; gap: 5px; padding: 8px 10px 0 0; }
.b-ok { width: 54px; height: 25px; background: #72b2c7; color: #fff; border: 0; font-size: 12px; }
.b-cancel { width: 54px; height: 25px; background: #e0e0e0; color: #222; border: 1px solid #aaa; font-size: 12px; }
```
